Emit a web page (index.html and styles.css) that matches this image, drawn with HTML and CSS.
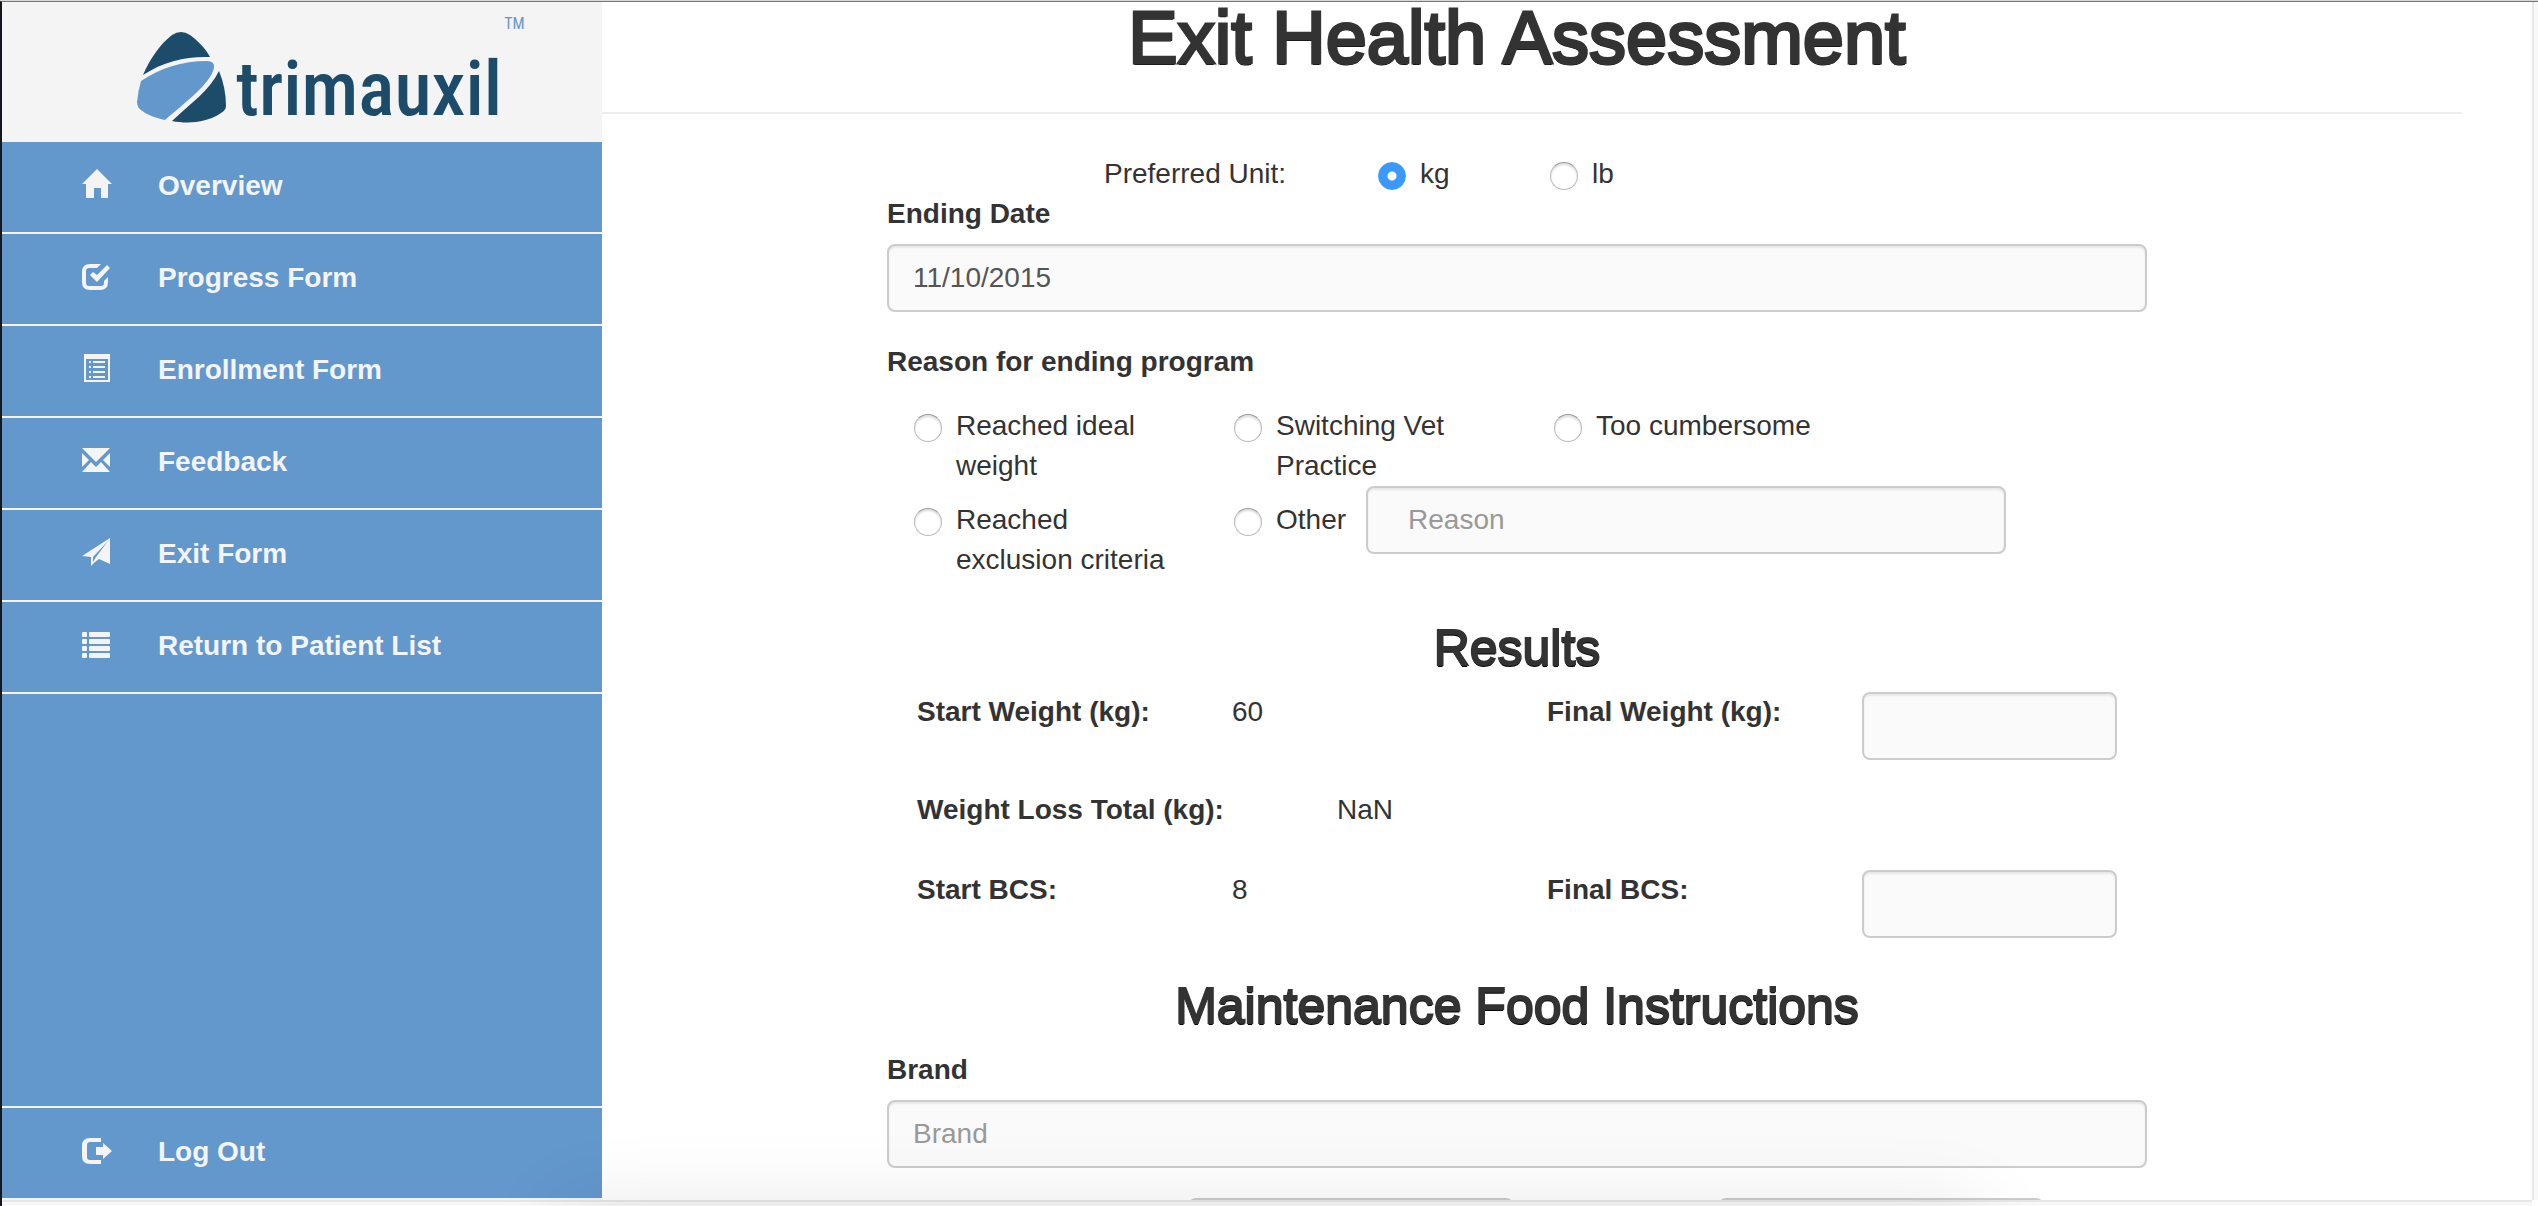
FILE: index.html
```html
<!DOCTYPE html>
<html lang="en">
<head>
<meta charset="utf-8">
<title>Exit Health Assessment - trimauxil</title>
<link rel="stylesheet" href="styles.css">
</head>
<body>
<div class="window">
  <aside class="sidebar">
    <div class="brand">
      <svg class="brand-mark" width="90" height="94" viewBox="136 30 90 94" aria-hidden="true">
        <path fill="#1c4c69" d="M143 75C150 59 160 44 172 35Q181 29 190 35C198 41 206 49 210 57C188 56 164 61 143 75Z"/>
        <path fill="#6398cd" d="M141 81C160 68 182 61 207 61Q215 61 214 68C210 84 188 100 165 120C156 118 147 115 141 110Q137 107 137 102Q138 91 141 81Z"/>
        <path fill="#1c4c69" d="M219 71Q226 88 226 106Q226 110 221 113C206 123 188 124 172 121C191 103 210 90 219 71Z"/>
      </svg>
      <span class="brand-name">trimauxil</span><span class="brand-tm">TM</span>
    </div>
    <nav class="menu">
      <a class="menu-item" href="#overview">
        <svg class="icon" viewBox="0 0 30 30" aria-hidden="true"><path d="M15 0L30 15H26V29H19V19H12V29H4V15H0Z"/></svg>Overview</a>
      <a class="menu-item" href="#progress">
        <svg class="icon" viewBox="0 0 30 30" aria-hidden="true"><path d="M19 3H8Q0 3 0 11V21Q0 29 8 29H18Q26 29 26 21V16L22 20V22Q22 25 19 25H7Q4 25 4 22V10Q4 7 7 7H15Z"/><path d="M8 14L11 11L15 14L25 4L28 7L15 21Z"/></svg>Progress Form</a>
      <a class="menu-item" href="#enrollment">
        <svg class="icon" viewBox="0 0 30 30" aria-hidden="true"><path fill-rule="evenodd" d="M2 1H28V29H2ZM4 6V27H26V6Z"/><path d="M7 8H9V10H7ZM11 8H23V10H11ZM7 13H9V15H7ZM11 13H23V15H11ZM7 18H9V20H7ZM11 18H23V20H11ZM7 23H9V25H7ZM11 23H23V25H11Z"/></svg>Enrollment Form</a>
      <a class="menu-item" href="#feedback">
        <svg class="icon" viewBox="0 0 30 30" aria-hidden="true"><path d="M0 3H28L14 17ZM0 8L7 15L0 22ZM28 8L21 15L28 22ZM0 27L9 17L14 22L19 17L28 27Z"/></svg>Feedback</a>
      <a class="menu-item" href="#exit">
        <svg class="icon" viewBox="0 0 30 30" aria-hidden="true"><path d="M28 1V27L17 22L13 25L9 29V20L0 19ZM26 4L11 20V25L14 20Z" fill-rule="evenodd"/></svg>Exit Form</a>
      <a class="menu-item" href="#patients">
        <svg class="icon" viewBox="0 0 30 30" aria-hidden="true"><g><rect x="0" y="3" width="5" height="5" rx="1"/><rect x="7" y="3" width="21" height="5" rx="1"/><rect x="0" y="10" width="5" height="5" rx="1"/><rect x="7" y="10" width="21" height="5" rx="1"/><rect x="0" y="17" width="5" height="5" rx="1"/><rect x="7" y="17" width="21" height="5" rx="1"/><rect x="0" y="24" width="5" height="5" rx="1"/><rect x="7" y="24" width="21" height="5" rx="1"/></g></svg>Return to Patient List</a>
      <a class="menu-item menu-item-last" href="#logout">
        <svg class="icon" viewBox="0 0 30 30" aria-hidden="true"><path d="M19 3H8Q0 3 0 11V21Q0 29 8 29H19V25H8Q5 25 5 22V10Q5 7 8 7H19Z"/><path d="M14 12H21V8L30 16L21 24V20H14Z"/></svg>Log Out</a>
    </nav>
  </aside>

  <main class="content">
    <header class="page-header"><h1>Exit Health Assessment</h1></header>
    <form class="form">
      <div class="units" role="radiogroup" aria-labelledby="unit-label">
        <span class="units-label" id="unit-label">Preferred Unit:</span>
        <label class="choice unit"><input type="radio" name="unit" checked><span>kg</span></label>
        <label class="choice unit"><input type="radio" name="unit"><span>lb</span></label>
      </div>

      <div class="field">
        <label class="field-label" for="ending-date">Ending Date</label>
        <input class="text-input" id="ending-date" type="text" value="11/10/2015">
      </div>

      <div class="field-label" id="reason-label">Reason for ending program</div>
      <div class="reasons" role="radiogroup" aria-labelledby="reason-label">
        <label class="choice reason"><input type="radio" name="reason"><span>Reached ideal weight</span></label>
        <label class="choice reason"><input type="radio" name="reason"><span>Switching Vet Practice</span></label>
        <label class="choice reason"><input type="radio" name="reason"><span>Too cumbersome</span></label>
        <label class="choice reason second-row"><input type="radio" name="reason"><span>Reached exclusion criteria</span></label>
        <div class="other">
          <label class="choice second-row"><input type="radio" name="reason"><span>Other</span></label>
          <input class="text-input other-input" type="text" placeholder="Reason" aria-label="Other reason">
        </div>
      </div>

      <h2>Results</h2>
      <div class="row quarters">
        <b>Start Weight (kg):</b><span>60</span>
        <label for="final-weight">Final Weight (kg):</label>
        <input class="text-input" id="final-weight" type="text">
      </div>
      <div class="row thirds">
        <b>Weight Loss Total (kg):</b><span>NaN</span>
      </div>
      <div class="row quarters">
        <b>Start BCS:</b><span>8</span>
        <label for="final-bcs">Final BCS:</label>
        <input class="text-input" id="final-bcs" type="text">
      </div>

      <h2>Maintenance Food Instructions</h2>
      <div class="field">
        <label class="field-label" for="food-brand">Brand</label>
        <input class="text-input" id="food-brand" type="text" placeholder="Brand">
      </div>
      <div class="amounts">
        <input class="text-input" type="text" aria-label="Cups per day">
        <input class="text-input" type="text" aria-label="Cans per day">
      </div>
    </form>
  </main>
  <div class="track track-right"></div>
  <div class="track track-bottom"></div>
  <div class="dock-shade"></div>
</div>
</body>
</html>
```
FILE: styles.css
```css
* { box-sizing: border-box; }

body {
  margin: 0;
  border-top: 1px solid #d8d8d8;
  color: #333;
  background: #fff;
  font: 28px/40px "Liberation Sans", Arial, sans-serif;
}

.window {
  position: relative;
  display: grid;
  grid-template: minmax(0, 1fr) 6px / 600px minmax(0, 1fr) 6px;
  height: calc(100vh - 1px);
  overflow: hidden;
  border-left: 2px solid #16161d;
  border-top: 1px solid #777;
}

/* Sidebar */
.sidebar {
  display: flex;
  flex-direction: column;
  background: #6398cd;
}

.brand {
  display: flex;
  height: 140px;
  padding: 28px 0 0 134px;
  background: #f4f4f4;
}

.brand-mark { flex: none; }

.brand-name {
  margin-left: 10px;
  color: #1c4c69;
  font: 500 76px/118px "Roboto Condensed", Roboto, "Liberation Sans", sans-serif;
}

.brand-tm {
  margin: -16px 0 0 2px;
  color: #6398cd;
  font: 16px/20px "Roboto Condensed", Roboto, "Liberation Sans", sans-serif;
}

.menu {
  display: flex;
  flex: 1;
  flex-direction: column;
}

.menu-item {
  display: flex;
  gap: 46px;
  padding: 24px 80px 26px;
  border-bottom: 2px solid #f4f4f4;
  color: #f4f4f4;
  font-weight: bold;
  text-decoration: none;
}

.menu-item-last {
  margin-top: auto;
  border-top: 2px solid #f4f4f4;
}

.icon {
  flex: none;
  width: 30px;
  height: 30px;
  margin-top: 3px;
  fill: #f4f4f4;
}

/* Main column */
.content {
  overflow: hidden;
  padding-right: 100px;
}

.page-header {
  margin-right: -30px;
  padding-right: 30px;
  border-bottom: 2px solid #eee;
}

h1, h2 {
  margin: 0;
  font-weight: normal;
  text-align: center;
  text-shadow: 0 2px 0 #000;
  -webkit-text-stroke: 2px #333;
}

h1 {
  padding-bottom: 38px;
  font-size: 74px;
  line-height: 72px;
  -webkit-text-stroke-width: 3px;
}

h2 {
  padding: 40px 0 16px;
  font-size: 50px;
  line-height: 56px;
}

.form {
  max-width: 1260px;
  margin: 40px auto 0;
}

.units {
  display: flex;
  padding-left: 217px;
}

.units-label { width: 274px; }
.unit { width: 172px; }

.choice {
  display: flex;
  gap: 14px;
}

input[type="radio"] {
  flex: none;
  width: 28px;
  height: 28px;
  margin: 8px 0 0;
  appearance: none;
  border: 1px solid #bbb;
  border-top-color: #999;
  border-radius: 50%;
  background: #fff;
  box-shadow: inset 0 2px 2px #ddd;
}

input[type="radio"]:checked {
  border-color: #3b99fc;
  background: radial-gradient(circle, #fff 4px, #3b99fc 5px);
  box-shadow: none;
}

.field { margin-bottom: 30px; }

.field-label {
  display: block;
  margin-bottom: 10px;
  font-weight: bold;
}

.text-input {
  display: block;
  width: 100%;
  height: 68px;
  padding: 12px 24px;
  border: 2px solid #ccc;
  border-radius: 8px;
  color: #555;
  background: #fafafa;
  box-shadow: inset 0 2px 2px rgba(0, 0, 0, .075);
  font: inherit;
}

.text-input::placeholder { color: #999; }

.reasons {
  display: grid;
  grid-template-columns: repeat(3, 320px);
  padding: 14px 0 0 27px;
}

.reason { padding-right: 50px; }
.second-row { padding-top: 14px; }

.other {
  display: flex;
  grid-column: 2 / -1;
  gap: 20px;
}

.other-input {
  flex: none;
  width: 640px;
  padding-left: 40px;
}

.row {
  display: grid;
  column-gap: 60px;
  padding: 0 30px;
}

.row + .row { margin-top: 30px; }
.row label { font-weight: bold; }
.row > * { white-space: nowrap; }
.quarters { grid-template-columns: repeat(4, minmax(0, 1fr)); }

.thirds {
  grid-template-columns: repeat(3, minmax(0, 1fr));
  padding-bottom: 10px;
}

.amounts {
  display: grid;
  grid-template-columns: 326px 326px;
  gap: 204px;
  padding-left: 301px;
}

/* Scroll tracks and the soft shade at the window's lower edge */
.track { background: #f8f8f8; }
.track-right { border-left: 2px solid #e7e7e7; }

.track-bottom {
  grid-column: 1 / 3;
  border-top: 2px solid #e7e7e7;
}

.dock-shade {
  position: absolute;
  top: 100%;
  left: 22%;
  right: 22%;
  height: 100px;
  box-shadow: 0 0 80px rgba(0, 0, 0, .1);
  pointer-events: none;
}
```
